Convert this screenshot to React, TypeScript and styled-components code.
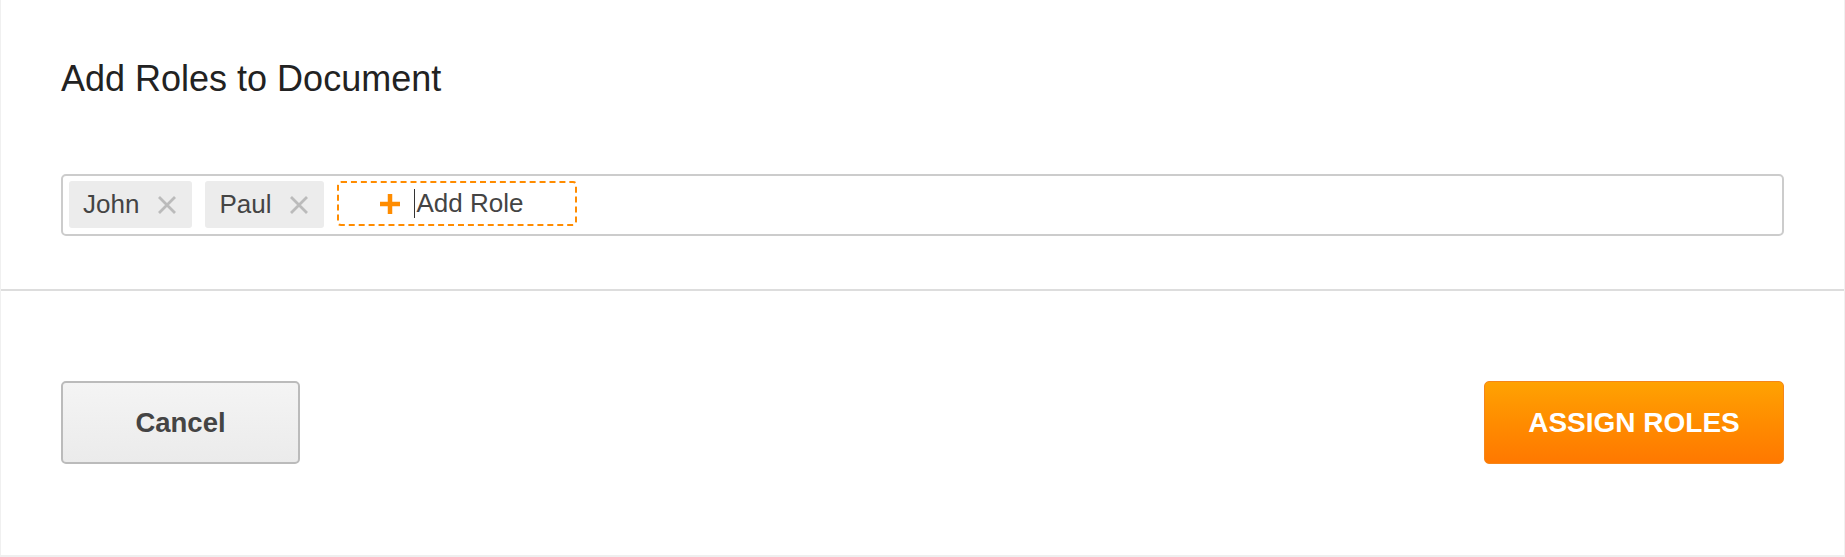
import React from "react";
import styled, { createGlobalStyle } from "styled-components";

const GlobalStyle = createGlobalStyle`
  html, body {
    margin: 0;
    padding: 0;
    background: #ffffff;
    font-family: "Liberation Sans", Arial, sans-serif;
  }
  * { box-sizing: border-box; }
`;

const Card = styled.div`
  width: 100%;
  background: #ffffff;
  border-left: 1px solid #f0f0f0;
  border-right: 1px solid #f0f0f0;
  border-bottom: 2px solid #efefef;
`;

const Header = styled.section`
  padding: 58px 60px 53px 60px;
  border-bottom: 2px solid #dddddd;
`;

const Title = styled.h1`
  margin: 0 0 74px 0;
  font-size: 36px;
  line-height: 42px;
  font-weight: 400;
  color: #222222;
`;

const TagInput = styled.div`
  height: 62px;
  border: 2px solid #cccccc;
  border-radius: 5px;
  padding: 5px 5px 0 6px;
  display: flex;
  align-items: flex-start;
  gap: 13px;
`;

const Tag = styled.div`
  height: 47px;
  display: flex;
  align-items: center;
  gap: 18px;
  padding: 0 15px 0 14px;
  background: #ececec;
  border-radius: 3px;
  font-size: 26px;
  color: #444444;
`;

const RemoveButton = styled.button`
  border: 0;
  background: none;
  padding: 0;
  width: 20px;
  height: 20px;
  display: flex;
  align-items: center;
  justify-content: center;
  cursor: pointer;
`;

const AddRole = styled.div`
  width: 240px;
  height: 45px;
  border: 2px dashed #ff8c00;
  border-radius: 4px;
  display: flex;
  align-items: center;
  padding-left: 41px;
  font-size: 26px;
  color: #444444;
`;

const PlusIcon = styled.svg`
  width: 20px;
  height: 20px;
  margin-right: 14px;
  flex-shrink: 0;
`;

const Caret = styled.span`
  display: inline-block;
  width: 1px;
  height: 29px;
  background: #333333;
  margin-right: 1px;
`;

const Footer = styled.section`
  padding: 90px 60px 91px 60px;
  display: flex;
  justify-content: space-between;
  align-items: center;
`;

const Button = styled.button<{ $primary?: boolean }>`
  height: 83px;
  width: ${(p) => (p.$primary ? "300px" : "239px")};
  border-radius: 5px;
  font-family: "Liberation Sans", Arial, sans-serif;
  font-weight: 700;
  font-size: ${(p) => (p.$primary ? "28px" : "27.5px")};
  cursor: pointer;
  color: ${(p) => (p.$primary ? "#ffffff" : "#444444")};
  border: ${(p) => (p.$primary ? "1px solid #f5861a" : "2px solid #bbbbbb")};
  background: ${(p) =>
    p.$primary
      ? "linear-gradient(to bottom, #ffa202 0%, #ff8c00 50%, #ff7800 100%)"
      : "linear-gradient(to bottom, #f4f4f4 0%, #ebebeb 100%)"};
`;

const XIcon = () => (
  <svg width="20" height="20" viewBox="0 0 20 20">
    <path d="M2 2 L18 18 M18 2 L2 18" stroke="#bbbbbb" strokeWidth="2.8" strokeLinecap="butt" />
  </svg>
);

const roles = ["John", "Paul"];

export default function App() {
  return (
    <>
      <GlobalStyle />
      <Card>
        <Header>
          <Title>Add Roles to Document</Title>
          <TagInput>
            {roles.map((r) => (
              <Tag key={r}>
                <span>{r}</span>
                <RemoveButton aria-label={`Remove ${r}`}>
                  <XIcon />
                </RemoveButton>
              </Tag>
            ))}
            <AddRole>
              <PlusIcon viewBox="0 0 20 20">
                <path d="M10 0 V20 M0 10 H20" stroke="#ff8c00" strokeWidth="4.5" />
              </PlusIcon>
              <Caret />
              <span>Add Role</span>
            </AddRole>
          </TagInput>
        </Header>
        <Footer>
          <Button>Cancel</Button>
          <Button $primary>ASSIGN ROLES</Button>
        </Footer>
      </Card>
    </>
  );
}
